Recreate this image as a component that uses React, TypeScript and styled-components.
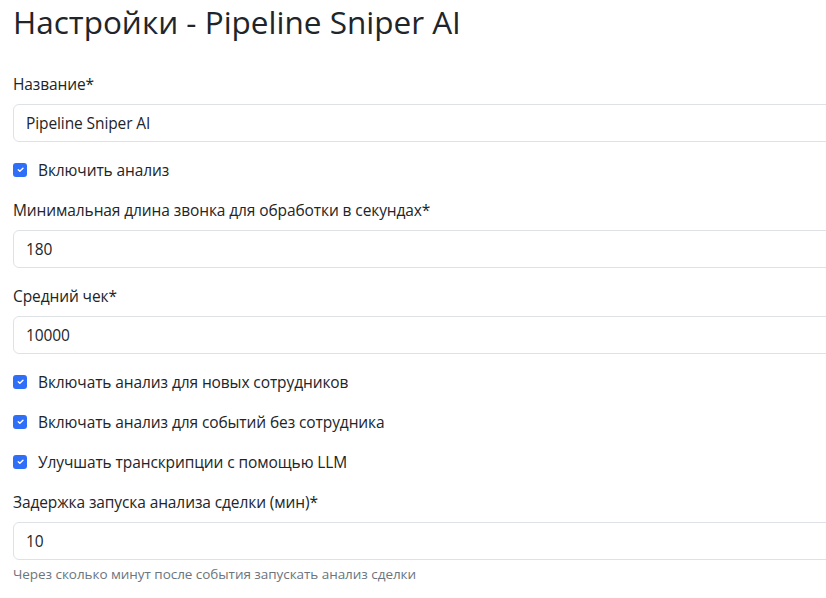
import React from "react";
import styled, { createGlobalStyle } from "styled-components";

const GlobalStyle = createGlobalStyle`
  html, body {
    margin: 0;
    padding: 0;
    background: #fff;
    overflow: hidden;
  }
  body {
    font-family: "Open Sans", "Noto Sans", sans-serif;
    color: #212529;
    font-size: 16px;
    line-height: 1.5;
  }
  * {
    box-sizing: border-box;
  }
`;

const FIELDS = [
  { type: "input", label: "Название*", value: "Pipeline Sniper AI" },
  { type: "check", label: "Включить анализ" },
  {
    type: "input",
    label: "Минимальная длина звонка для обработки в секундах*",
    value: "180",
  },
  { type: "input", label: "Средний чек*", value: "10000" },
  { type: "check", label: "Включать анализ для новых сотрудников" },
  { type: "check", label: "Включать анализ для событий без сотрудника" },
  { type: "check", label: "Улучшать транскрипции с помощью LLM" },
  {
    type: "input",
    label: "Задержка запуска анализа сделки (мин)*",
    value: "10",
    help: "Через сколько минут после события запускать анализ сделки",
  },
];

const CheckIcon = () => (
  <svg width="9" height="9" viewBox="0 0 20 20" fill="none">
    <path
      d="M5 10.5l3.5 3.5 7-7"
      stroke="#fff"
      strokeWidth="3"
      strokeLinecap="round"
      strokeLinejoin="round"
    />
  </svg>
);

const App = () => {
  return (
    <Page>
      <GlobalStyle />
      <Title>Настройки - Pipeline Sniper AI</Title>
      <Form>
        {FIELDS.map((field, index) =>
          field.type === "check" ? (
            <CheckRow key={index}>
              <CheckBox>
                <CheckIcon />
              </CheckBox>
              <span>{field.label}</span>
            </CheckRow>
          ) : (
            <Group key={index}>
              <Label>{field.label}</Label>
              <Input>{field.value}</Input>
              {field.help && <Help>{field.help}</Help>}
            </Group>
          )
        )}
      </Form>
    </Page>
  );
};

const Page = styled.div`
  padding: 3px 0 0 13px;
  width: 1000px;
`;

const Title = styled.h2`
  margin: 0 0 31px;
  font-size: 31.5px;
  font-weight: 500;
  line-height: 1.2;
`;

const Form = styled.div`
  display: flex;
  flex-direction: column;
  gap: 16px;
`;

const Group = styled.div`
  display: flex;
  flex-direction: column;
`;

const Label = styled.label`
  margin-bottom: 8px;
  font-size: 15.5px;
  line-height: 24px;
  letter-spacing: -0.1px;
`;

const Input = styled.div`
  height: 38px;
  padding: 6px 12px;
  border: 1px solid #dee2e6;
  border-radius: 6px;
  font-size: 15.5px;
  letter-spacing: -0.1px;
  line-height: 24px;
  background: #fff;
`;

const Help = styled.div`
  margin-top: 4px;
  font-size: 13.5px;
  line-height: 21px;
  color: #6c757d;
  letter-spacing: -0.05px;
`;

const CheckRow = styled.div`
  display: flex;
  align-items: center;
  gap: 11px;
  height: 24px;
  font-size: 15.5px;
  line-height: 24px;
  letter-spacing: -0.1px;
`;

const CheckBox = styled.span`
  width: 14px;
  height: 14px;
  border-radius: 3px;
  background: #2f6ef6;
  display: flex;
  align-items: center;
  justify-content: center;
  flex-shrink: 0;
`;

export default App;
